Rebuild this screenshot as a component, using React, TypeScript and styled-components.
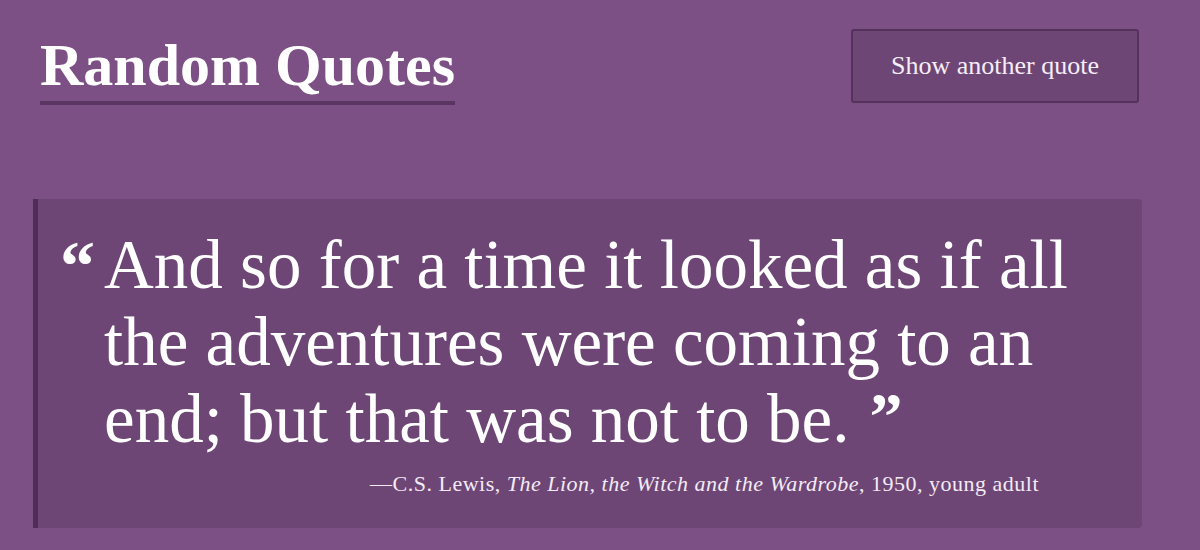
import React from "react";
import styled, { createGlobalStyle } from "styled-components";

const Global = createGlobalStyle`
  html, body { margin: 0; padding: 0; }
  body {
    background: #7c4f85;
    font-family: "Liberation Serif", "Times New Roman", serif;
    color: #ffffff;
    width: 1200px;
    height: 550px;
    overflow: hidden;
  }
`;

const Page = styled.div`
  display: flex;
  flex-direction: column;
`;

const Header = styled.header`
  display: flex;
  justify-content: space-between;
  align-items: flex-start;
  padding: 0 61px 0 40px;
`;

const Title = styled.h1`
  margin: 30px 0 0;
  font-size: 60px;
  line-height: 71px;
  font-weight: 700;
  border-bottom: 4px solid #5b3562;
  display: inline-block;
  color: #ffffff;
`;

const Button = styled.button`
  margin-top: 29px;
  width: 288px;
  height: 74px;
  background: #6d4676;
  border: 2px solid #55325c;
  border-radius: 3px;
  color: #f6eef7;
  font-family: "Liberation Serif", "Times New Roman", serif;
  font-size: 26px;
  cursor: pointer;
`;

const Card = styled.blockquote`
  margin: 94px 0 0 33px;
  width: 1109px;
  box-sizing: border-box;
  background: #6d4676;
  border-left: 5px solid #4f2d56;
  border-radius: 0 4px 4px 0;
  padding: 28px 40px 30px 22px;
  display: flex;
`;

const OpenMark = styled.span`
  flex: 0 0 44px;
  font-size: 70px;
  font-weight: 700;
  line-height: 77px;
`;

const Body = styled.div`
  flex: 1;
  display: flex;
  flex-direction: column;
`;

const QuoteText = styled.p`
  margin: 0;
  font-size: 69px;
  line-height: 77px;
  max-width: 990px;
`;

const CloseMark = styled.span`
  display: inline-block;
  margin-left: 20px;
  font-size: 66px;
  font-weight: 700;
  line-height: 1;
  position: relative;
  top: -4px;
`;

const Attribution = styled.footer`
  margin: 12px 0 0;
  font-size: 22px;
  letter-spacing: 0.5px;
  line-height: 28px;
  color: #f3ebf4;
  text-align: right;
  padding-right: 63px;
`;

export default function App() {
  return (
    <Page>
      <Global />
      <Header>
        <Title>Random Quotes</Title>
        <Button>Show another quote</Button>
      </Header>
      <Card>
        <OpenMark>“</OpenMark>
        <Body>
          <QuoteText>
            And so for a time it looked as if all the adventures were coming to
            an end; but that was not to be.<CloseMark>”</CloseMark>
          </QuoteText>
          <Attribution>
            —C.S. Lewis, <i>The Lion, the Witch and the Wardrobe</i>, 1950, young adult
          </Attribution>
        </Body>
      </Card>
    </Page>
  );
}
